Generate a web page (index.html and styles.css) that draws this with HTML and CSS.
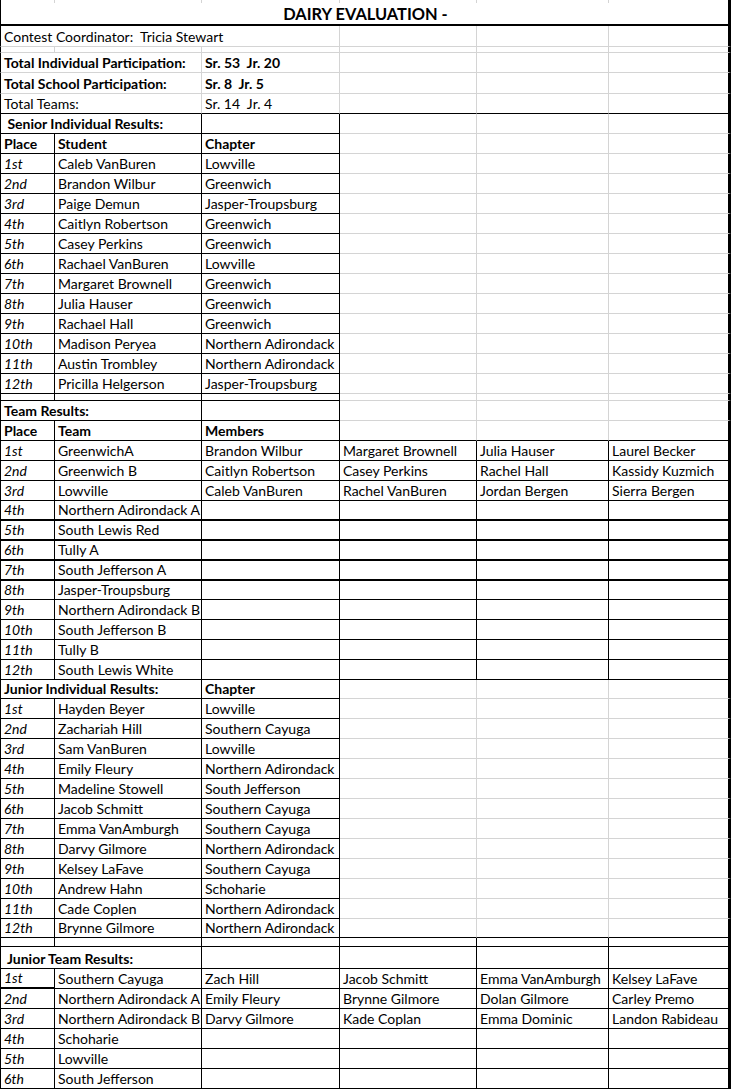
FILE: index.html
```html
<!DOCTYPE html>
<html lang="en">
<head>
<meta charset="utf-8">
<title>Dairy Evaluation</title>
<link rel="stylesheet" href="styles.css">
</head>
<body>
<table class="sheet">
  <colgroup>
    <col class="c1"><col class="c2"><col class="c3"><col class="c4"><col class="c5"><col class="c6">
  </colgroup>
  <tbody>
    <tr class="h3"><td></td><td></td><td></td><td></td><td></td><td></td></tr>
    <tr class="h23"><td colspan="6" class="title">DAIRY EVALUATION -</td></tr>
    <tr class="h21"><td colspan="3">Contest Coordinator:&nbsp; Tricia Stewart</td><td></td><td></td><td></td></tr>
    <tr class="h6"><td></td><td></td><td></td><td></td><td></td><td></td></tr>
    <tr><td colspan="2" class="hd">Total Individual Participation:</td><td class="hd">Sr. 53&nbsp; Jr. 20</td><td></td><td></td><td></td></tr>
    <tr class="h21"><td colspan="2" class="hd">Total School Participation:</td><td class="hd">Sr. 8&nbsp; Jr. 5</td><td></td><td></td><td></td></tr>
    <tr class="blk"><td colspan="2">Total Teams:</td><td>Sr. 14&nbsp; Jr. 4</td><td></td><td></td><td></td></tr>

    <tr><td colspan="2" class="hd k kb">&nbsp;Senior Individual Results:</td><td class="k kb"></td><td></td><td></td><td></td></tr>
    <tr class="b3"><td class="hd">Place</td><td class="hd">Student</td><td class="hd">Chapter</td><td></td><td></td><td></td></tr>
    <tr class="b3"><td class="pl">1st</td><td>Caleb VanBuren</td><td>Lowville</td><td></td><td></td><td></td></tr>
    <tr class="b3"><td class="pl">2nd</td><td>Brandon Wilbur</td><td>Greenwich</td><td></td><td></td><td></td></tr>
    <tr class="b3"><td class="pl">3rd</td><td>Paige Demun</td><td>Jasper-Troupsburg</td><td></td><td></td><td></td></tr>
    <tr class="b3"><td class="pl">4th</td><td>Caitlyn Robertson</td><td>Greenwich</td><td></td><td></td><td></td></tr>
    <tr class="b3"><td class="pl">5th</td><td>Casey Perkins</td><td>Greenwich</td><td></td><td></td><td></td></tr>
    <tr class="b3"><td class="pl">6th</td><td>Rachael VanBuren</td><td>Lowville</td><td></td><td></td><td></td></tr>
    <tr class="b3"><td class="pl">7th</td><td>Margaret Brownell</td><td>Greenwich</td><td></td><td></td><td></td></tr>
    <tr class="b3"><td class="pl">8th</td><td>Julia Hauser</td><td>Greenwich</td><td></td><td></td><td></td></tr>
    <tr class="b3"><td class="pl">9th</td><td>Rachael Hall</td><td>Greenwich</td><td></td><td></td><td></td></tr>
    <tr class="b3"><td class="pl">10th</td><td>Madison Peryea</td><td>Northern Adirondack</td><td></td><td></td><td></td></tr>
    <tr class="b3"><td class="pl">11th</td><td>Austin Trombley</td><td>Northern Adirondack</td><td></td><td></td><td></td></tr>
    <tr class="b3"><td class="pl">12th</td><td>Pricilla Helgerson</td><td>Jasper-Troupsburg</td><td></td><td></td><td></td></tr>
    <tr class="h7 b3"><td></td><td></td><td></td><td></td><td></td><td></td></tr>

    <tr><td colspan="2" class="hd k kb">Team Results:</td><td class="k kb"></td><td></td><td></td><td></td></tr>
    <tr class="b3 blk"><td class="hd">Place</td><td class="hd">Team</td><td class="hd">Members</td><td></td><td></td><td></td></tr>
    <tr class="ball"><td class="pl">1st</td><td>GreenwichA</td><td>Brandon Wilbur</td><td>Margaret Brownell</td><td>Julia Hauser</td><td>Laurel Becker</td></tr>
    <tr class="ball"><td class="pl">2nd</td><td>Greenwich B</td><td>Caitlyn Robertson</td><td>Casey Perkins</td><td>Rachel Hall</td><td>Kassidy Kuzmich</td></tr>
    <tr class="ball"><td class="pl">3rd</td><td>Lowville</td><td>Caleb VanBuren</td><td>Rachel VanBuren</td><td>Jordan Bergen</td><td>Sierra Bergen</td></tr>
    <tr class="ball thick"><td class="pl">4th</td><td>Northern Adirondack A</td><td></td><td></td><td></td><td></td></tr>
    <tr class="ball thick"><td class="pl">5th</td><td>South Lewis Red</td><td></td><td></td><td></td><td></td></tr>
    <tr class="ball thick"><td class="pl">6th</td><td>Tully A</td><td></td><td></td><td></td><td></td></tr>
    <tr class="ball thick"><td class="pl">7th</td><td>South Jefferson A</td><td></td><td></td><td></td><td></td></tr>
    <tr class="ball h19"><td class="pl">8th</td><td>Jasper-Troupsburg</td><td></td><td></td><td></td><td></td></tr>
    <tr class="ball"><td class="pl">9th</td><td>Northern Adirondack B</td><td></td><td></td><td></td><td></td></tr>
    <tr class="ball"><td class="pl">10th</td><td>South Jefferson B</td><td></td><td></td><td></td><td></td></tr>
    <tr class="ball"><td class="pl">11th</td><td>Tully B</td><td></td><td></td><td></td><td></td></tr>
    <tr class="ball"><td class="pl">12th</td><td>South Lewis White</td><td></td><td></td><td></td><td></td></tr>

    <tr class="h19"><td colspan="2" class="hd k kb">Junior Individual Results:</td><td class="hd k kb">Chapter</td><td></td><td></td><td></td></tr>
    <tr class="b3"><td class="pl">1st</td><td>Hayden Beyer</td><td>Lowville</td><td></td><td></td><td></td></tr>
    <tr class="b3"><td class="pl">2nd</td><td>Zachariah Hill</td><td>Southern Cayuga</td><td></td><td></td><td></td></tr>
    <tr class="b3"><td class="pl">3rd</td><td>Sam VanBuren</td><td>Lowville</td><td></td><td></td><td></td></tr>
    <tr class="b3"><td class="pl">4th</td><td>Emily Fleury</td><td>Northern Adirondack</td><td></td><td></td><td></td></tr>
    <tr class="b3"><td class="pl">5th</td><td>Madeline Stowell</td><td>South Jefferson</td><td></td><td></td><td></td></tr>
    <tr class="b3"><td class="pl">6th</td><td>Jacob Schmitt</td><td>Southern Cayuga</td><td></td><td></td><td></td></tr>
    <tr class="b3"><td class="pl">7th</td><td>Emma VanAmburgh</td><td>Southern Cayuga</td><td></td><td></td><td></td></tr>
    <tr class="b3"><td class="pl">8th</td><td>Darvy Gilmore</td><td>Northern Adirondack</td><td></td><td></td><td></td></tr>
    <tr class="b3"><td class="pl">9th</td><td>Kelsey LaFave</td><td>Southern Cayuga</td><td></td><td></td><td></td></tr>
    <tr class="b3"><td class="pl">10th</td><td>Andrew Hahn</td><td>Schoharie</td><td></td><td></td><td></td></tr>
    <tr class="b3"><td class="pl">11th</td><td>Cade Coplen</td><td>Northern Adirondack</td><td></td><td></td><td></td></tr>
    <tr class="b3 blk h19"><td class="pl">12th</td><td>Brynne Gilmore</td><td>Northern Adirondack</td><td></td><td></td><td></td></tr>
    <tr class="h9 ball"><td></td><td></td><td></td><td></td><td></td><td></td></tr>

    <tr class="h22 ball"><td colspan="2" class="hd">&nbsp;Junior Team Results:</td><td></td><td></td><td></td><td></td></tr>
    <tr class="ball"><td class="pl kB">1st</td><td>Southern Cayuga</td><td>Zach Hill</td><td>Jacob Schmitt</td><td>Emma VanAmburgh</td><td>Kelsey LaFave</td></tr>
    <tr class="ball"><td class="pl">2nd</td><td>Northern Adirondack A</td><td>Emily Fleury</td><td>Brynne Gilmore</td><td>Dolan Gilmore</td><td>Carley Premo</td></tr>
    <tr class="ball"><td class="pl">3rd</td><td>Northern Adirondack B</td><td>Darvy Gilmore</td><td>Kade Coplan</td><td>Emma Dominic</td><td>Landon Rabideau</td></tr>
    <tr class="ball"><td class="pl">4th</td><td>Schoharie</td><td></td><td></td><td></td><td></td></tr>
    <tr class="ball"><td class="pl">5th</td><td>Lowville</td><td></td><td></td><td></td><td></td></tr>
    <tr class="ball"><td class="pl">6th</td><td>South Jefferson</td><td></td><td></td><td></td><td></td></tr>
  </tbody>
</table>
</body>
</html>
```

FILE: styles.css
```css
* { box-sizing: border-box; }

body {
  margin: 0;
  background: #fff;
  color: #000;
  font-family: Lato, "Liberation Sans", sans-serif;
  font-size: 14px;
}

.sheet {
  border-collapse: separate;
  border-spacing: 0;
  table-layout: fixed;
  width: 731px;
}

.c1 { width: 55px; }
.c2 { width: 147px; }
.c3 { width: 138px; }
.c4 { width: 137px; }
.c5 { width: 132px; }
.c6 { width: 122px; }

.sheet tr { height: 20px; }
.sheet tr.h3 { height: 3px; }
.sheet tr.h6 { height: 6px; }
.sheet tr.h7 { height: 7px; }
.sheet tr.h9 { height: 9px; }
.sheet tr.h19 { height: 19px; }
.sheet tr.h21 { height: 21px; }
.sheet tr.h22 { height: 22px; }
.sheet tr.h23 { height: 23px; }

.sheet td {
  padding: 0 1px 0 3px;
  white-space: nowrap;
  overflow: visible;
  vertical-align: bottom;
  line-height: 18px;
  border-right: 1px solid #d4d4d4;
  border-bottom: 1px solid #d4d4d4;
}

.sheet td:first-child { border-left: 1px solid #000; }
.sheet tr td:last-child { border-right: 3px solid #000; }
.sheet tr.h3 td { border-bottom: 0; }

.sheet .title {
  text-align: center;
  vertical-align: middle;
  font-weight: bold;
  font-size: 16.4px;
  border-bottom: 2px solid #000;
}

.sheet td.k { border-right-color: #000; }
.sheet td.kb { border-bottom-color: #000; }
.sheet td.kB { border-bottom: 2px solid #000; }

.sheet tr.b3 td:nth-child(-n+3) {
  border-right-color: #000;
  border-bottom-color: #000;
}

.sheet tr.blk td { border-bottom-color: #000; }

.sheet tr.ball td {
  border-right-color: #000;
  border-bottom-color: #000;
}

.sheet tr.thick td { border-bottom-width: 2px; }

.hd { font-weight: bold; }
.pl { font-style: italic; }
```
